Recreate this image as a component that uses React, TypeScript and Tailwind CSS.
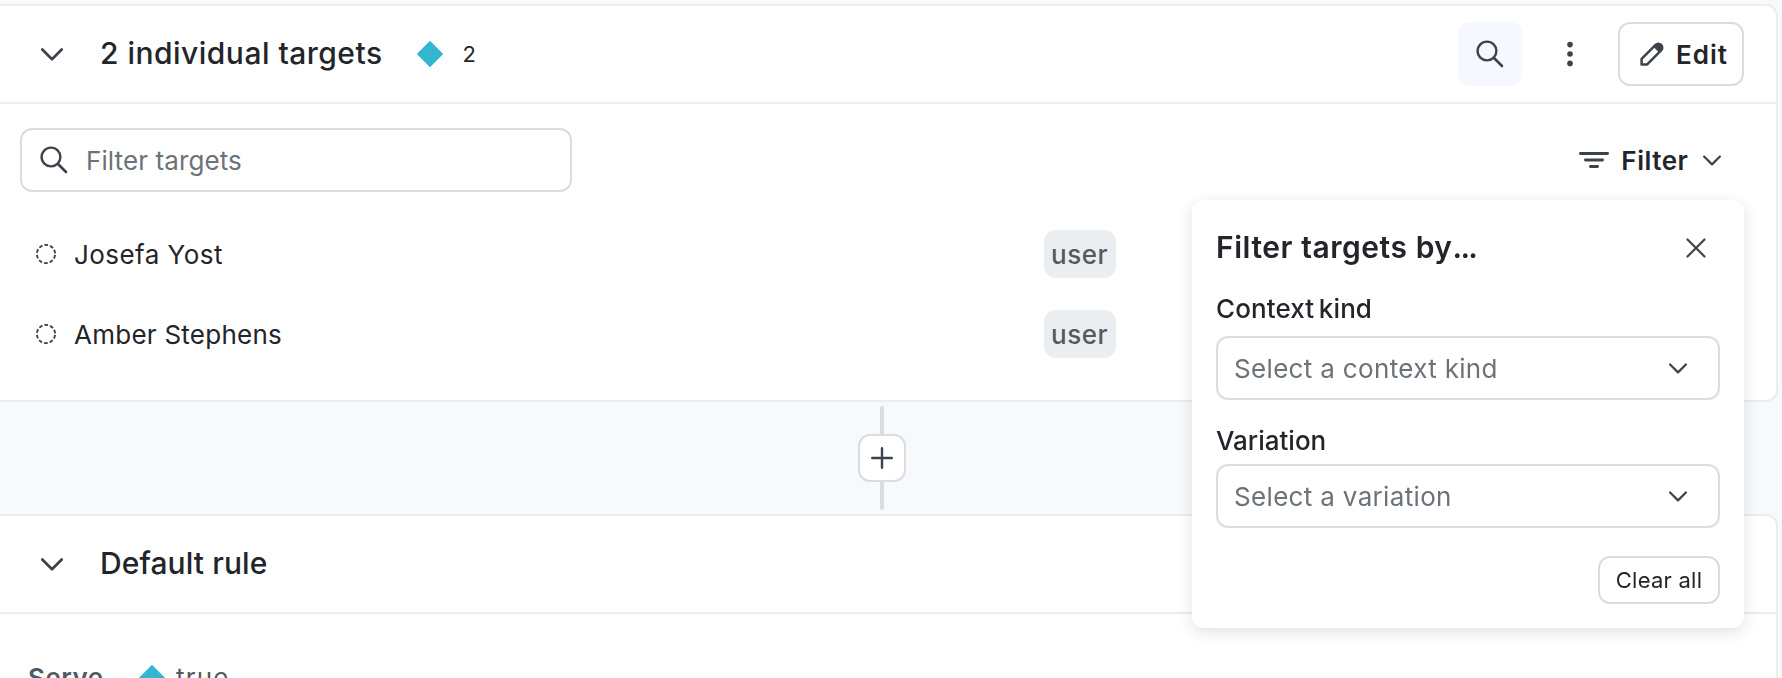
import { useState } from "react";

const targets = [
  { name: "Josefa Yost", kind: "user", spacing: "tracking-[0.45px]" },
  { name: "Amber Stephens", kind: "user", spacing: "tracking-[0.25px]" },
];

const Chevron = ({ className }: { className: string }) => (
  <svg viewBox="0 0 22 13" fill="none" className={className}>
    <path
      d="M1.3 1.5 11 11.2l9.7-9.7"
      stroke="currentColor"
      strokeWidth="2.7"
      strokeLinecap="round"
      strokeLinejoin="round"
    />
  </svg>
);

const SearchIcon = () => (
  <svg viewBox="0 0 28 28" fill="none" className="w-7 h-7 shrink-0">
    <circle cx="11" cy="11" r="9.4" stroke="currentColor" strokeWidth="2.4" />
    <path d="m18 18 8 8" stroke="currentColor" strokeWidth="2.6" strokeLinecap="round" />
  </svg>
);

const Diamond = () => (
  <svg viewBox="0 0 26 26" className="w-[26px] h-[26px] shrink-0">
    <path
      d="M13 .8 25.2 13 13 25.2.8 13Z"
      fill="#34b5d0"
      stroke="#34b5d0"
      strokeWidth="1.4"
      strokeLinejoin="round"
    />
  </svg>
);

const Select = ({ placeholder }: { placeholder: string }) => (
  <button className="h-16 w-full flex items-center justify-between rounded-xl border-2 border-[#d8dde3] bg-white pl-4 pr-[31px]">
    <span className="text-[26px] tracking-[0.33px] text-[#6c727a]">{placeholder}</span>
    <Chevron className="w-[18px] h-[11px] text-[#3d434b]" />
  </button>
);

const App = () => {
  const [isOpen, setOpen] = useState<boolean>(true);

  return (
    <div className="relative h-[678px] w-full overflow-hidden bg-[#f7f9fb] pt-1 pr-1 font-[Inter,sans-serif] text-[26px] text-[#23252a]">
      {/* individual targets */}
      <section className="h-[398px] rounded-r-xl border-2 border-l-0 border-[#ebeef1] bg-white">
        <header className="flex h-[98px] items-center border-b-2 border-[#ebeef1] pl-[41px] pr-8">
          <Chevron className="w-[22px] h-[13px] text-[#3d434b]" />
          <h2 className="ml-[37px] pb-0.5 text-[30px] font-medium tracking-[0.48px]">
            2 individual targets
          </h2>
          <div className="ml-[34px] flex items-center gap-5">
            <Diamond />
            <span className="text-[22px]">2</span>
          </div>
          <div className="ml-auto flex items-center text-[#3d434b]">
            <button className="flex h-16 w-16 items-center justify-center rounded-xl bg-[#f5f8ff]">
              <SearchIcon />
            </button>
            <button className="flex h-16 w-24 items-center justify-center">
              <svg viewBox="0 0 6 26" fill="currentColor" className="w-1.5 h-[26px]">
                <circle cx="3" cy="3.6" r="2.8" />
                <circle cx="3" cy="13" r="2.8" />
                <circle cx="3" cy="22.4" r="2.8" />
              </svg>
            </button>
            <button className="flex h-16 w-[126px] items-center rounded-xl border-2 border-[#d8dde3] pl-5">
              <svg viewBox="0 0 24 24" fill="none" className="w-6 h-6">
                <path
                  d="M1.6 22.4v-5.6L15.6 2.9a3.6 3.6 0 0 1 5.5 5.5L7.2 22.4Z"
                  stroke="currentColor"
                  strokeWidth="2.5"
                  strokeLinejoin="round"
                />
                <path d="m13.5 5 2.3-2.3a4 4 0 0 1 5.6 5.6L19 10.5Z" fill="currentColor" />
              </svg>
              <span className="ml-3 font-semibold tracking-[1px] text-[#23252a]">Edit</span>
            </button>
          </div>
        </header>

        <div className="flex items-center justify-between pt-6 pl-5 pr-[55px]">
          <div className="flex h-16 w-[552px] items-center rounded-xl border-2 border-[#d8dde3] pl-[18px] text-[#3d434b]">
            <SearchIcon />
            <input
              placeholder="Filter targets"
              className="ml-[18px] min-w-0 flex-1 tracking-[0.1px] outline-none placeholder:text-[#6c727a]"
            />
          </div>
          <button className="flex items-center text-[#3d434b]" onClick={() => setOpen(!isOpen)}>
            <svg viewBox="0 0 30 18" fill="none" className="w-[30px] h-[18px]">
              <path
                d="M1.4 2.5h27.2M6.4 9h17.2M11.4 15.5h7.2"
                stroke="currentColor"
                strokeWidth="2.8"
                strokeLinecap="round"
              />
            </svg>
            <span className="ml-3 font-semibold tracking-[0.55px] text-[#23252a]">Filter</span>
            <Chevron className="ml-[14.5px] w-[18px] h-[11px]" />
          </button>
        </div>

        <ul className="pt-[22px]">
          {targets.map((t) => (
            <li key={t.name} className="flex h-20 items-center pl-9">
              <svg viewBox="0 0 20 20" fill="none" className="w-5 h-5">
                <circle
                  cx="10"
                  cy="10"
                  r="9.1"
                  stroke="#3d434b"
                  strokeWidth="1.9"
                  strokeDasharray="3.7 2.018"
                  strokeDashoffset="-1"
                />
              </svg>
              <span className={`ml-[18px] w-[970px] ${t.spacing}`}>{t.name}</span>
              <span className="flex h-12 w-[72px] items-center rounded-xl bg-[#ebeef1] pl-[7px] font-medium tracking-[0.5px] text-[#545a62]">
                {t.kind}
              </span>
            </li>
          ))}
        </ul>
      </section>

      {/* add rule */}
      <div className="flex h-28 flex-col items-center py-1 pr-[14px]">
        <div className="w-1 h-7 rounded-t-full bg-[#d8dde3]"></div>
        <button className="flex h-12 w-12 shrink-0 items-center justify-center rounded-xl border-2 border-[#d8dde3] bg-white">
          <svg viewBox="0 0 22 22" fill="none" className="w-[22px] h-[22px]">
            <path d="M11 1.2v19.6M1.2 11h19.6" stroke="#3d434b" strokeWidth="2.4" strokeLinecap="round" />
          </svg>
        </button>
        <div className="w-1 h-7 rounded-b-full bg-[#d8dde3]"></div>
      </div>

      {/* default rule */}
      <section className="h-[300px] rounded-r-xl border-2 border-l-0 border-[#ebeef1] bg-white">
        <header className="flex h-[98px] items-center border-b-2 border-[#ebeef1] pl-[41px]">
          <Chevron className="w-[22px] h-[13px] text-[#3d434b]" />
          <h2 className="ml-[37px] pb-0.5 text-[30px] font-medium tracking-[0.1px]">Default rule</h2>
        </header>
        <div className="flex items-center pt-11 pl-7 text-[#545a62]">
          <span className="w-[111px] font-semibold tracking-[0.5px]">Serve</span>
          <Diamond />
          <span className="ml-[11px] tracking-[1.2px]">true</span>
        </div>
      </section>

      {/* filter popover */}
      {isOpen && (
        <div className="absolute left-[1192px] top-[200px] h-[428px] w-[552px] rounded-xl bg-white px-6 pt-6 shadow-[0_4px_16px_rgba(0,0,0,0.12)] will-change-transform">
          <div className="flex h-12 items-center justify-between">
            <h3 className="pb-0.5 text-[30px] font-semibold tracking-[0.55px]">
              Filter targets by<span className="tracking-[-1.7px]">...</span>
            </h3>
            <button className="mr-[14px] text-[#3d434b]" onClick={() => setOpen(false)}>
              <svg viewBox="0 0 20 20" fill="none" className="w-5 h-5">
                <path d="m1.5 1.5 17 17m0-17-17 17" stroke="currentColor" strokeWidth="2.2" strokeLinecap="round" />
              </svg>
            </button>
          </div>
          <div className="mt-5 flex flex-col">
            <span className="mb-[11px] h-[33px] font-medium leading-[33px] tracking-[0.1px] [word-spacing:-2.4px]">
              Context kind
            </span>
            <Select placeholder="Select a context kind" />
            <span className="mt-[25px] mb-[7px] h-8 font-medium leading-8">Variation</span>
            <Select placeholder="Select a variation" />
          </div>
          <div className="mt-7 flex justify-end">
            <button className="h-12 w-[122px] rounded-xl border-2 border-[#d8dde3] text-[22px] tracking-[0.25px]">
              Clear all
            </button>
          </div>
        </div>
      )}
    </div>
  );
};

export default App;
